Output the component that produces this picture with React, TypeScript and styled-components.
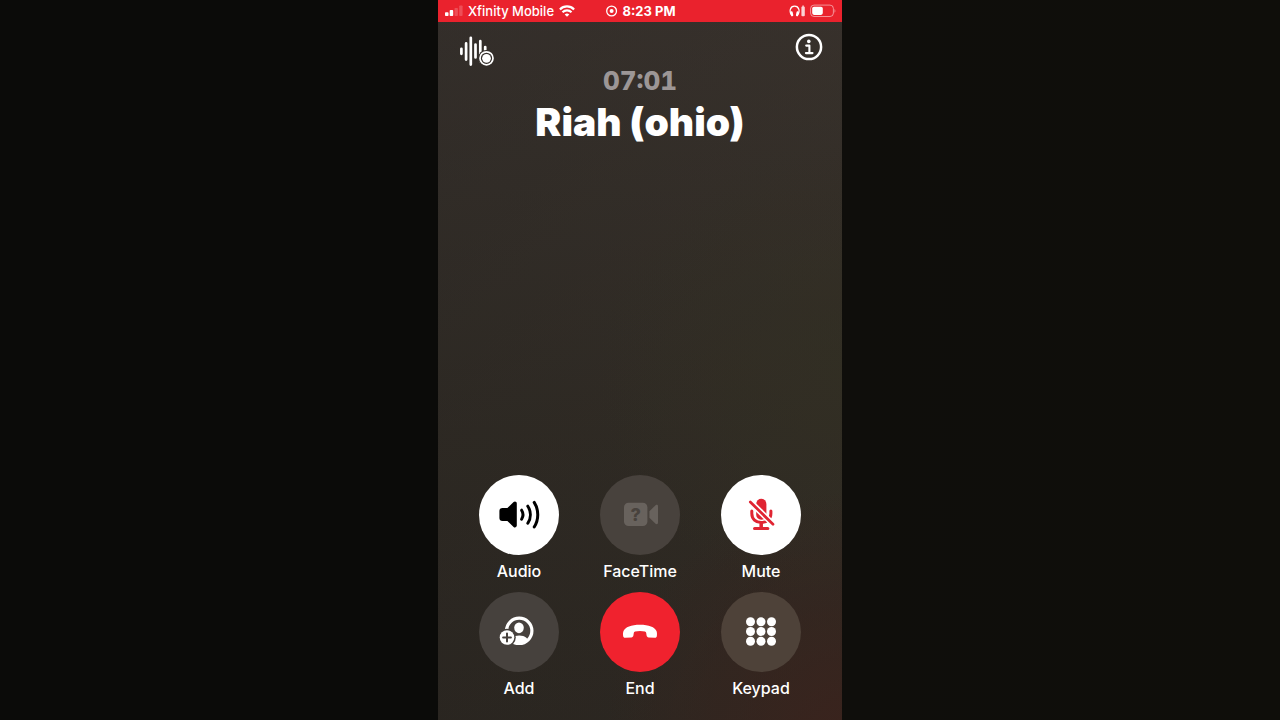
import type { ReactNode } from "react";
import styled, { createGlobalStyle } from "styled-components";

const GlobalStyle = createGlobalStyle`
  *, *::before, *::after { box-sizing: border-box; }
  body {
    margin: 0;
    background: linear-gradient(90deg, #0b0b09 0%, #0b0b09 34%, #0f0e0b 66%, #0f0e0a 100%);
    color: #fff;
    font-family: Inter, "Liberation Sans", sans-serif;
  }
`;

const Stage = styled.div`
  display: flex;
  justify-content: center;
  min-height: 100vh;
`;

const Phone = styled.main`
  display: flex;
  flex-direction: column;
  width: 100%;
  max-width: 404px;
  background:
    radial-gradient(circle at 102% 102%, #3a231d 0%, rgba(58, 35, 29, 0.5) 14%, rgba(58, 35, 29, 0) 29%),
    radial-gradient(ellipse at 104% 52%, rgba(50, 47, 35, 0.8) 0%, rgba(50, 47, 35, 0) 44%),
    linear-gradient(100deg, rgba(46, 42, 36, 0.3) 0%, rgba(62, 54, 42, 0.3) 100%),
    linear-gradient(180deg, #36302d 0%, #312c28 26%, #2b2722 60%, #26221e 100%);
`;

const StatusBar = styled.header`
  display: grid;
  grid-template-columns: 1fr auto 1fr;
  align-items: center;
  height: 22px;
  padding: 0 6px 0 7px;
  background: #ea222d;
  font-size: 13px;
  line-height: 22px;
  white-space: nowrap;
`;

const StatusGroup = styled.div<{ $end?: boolean; $bold?: boolean }>`
  display: flex;
  align-items: center;
  justify-content: ${(p) => (p.$end ? "flex-end" : "flex-start")};
  gap: ${(p) => (p.$end ? "4px" : "5px")};
  font-weight: ${(p) => (p.$bold ? 700 : 500)};
`;

const Toolbar = styled.div`
  display: flex;
  align-items: flex-start;
  justify-content: space-between;
  padding: 11px 19px 0 21px;
`;

const IconButton = styled.button`
  display: flex;
  padding: 0;
  border: 0;
  background: none;
  color: inherit;
  cursor: pointer;
`;

const Caller = styled.section`
  flex: 1;
  text-align: center;
`;

const Timer = styled.p`
  margin: 0;
  color: #9c9696;
  font-size: 26px;
  font-weight: 800;
  font-variant-numeric: tabular-nums;
  line-height: 28px;
`;

const Name = styled.h1`
  margin: 4px 0 0;
  font-size: 39px;
  font-weight: 900;
  line-height: 46px;
`;

const Controls = styled.nav`
  display: grid;
  grid-template-columns: repeat(3, 80px);
  justify-content: space-evenly;
  row-gap: 11px;
  padding-bottom: 22px;
`;

const CallButton = styled.button`
  display: flex;
  flex-direction: column;
  align-items: center;
  gap: 6px;
  padding: 0;
  border: 0;
  background: none;
  color: #fff;
  font-family: inherit;
  font-size: 16px;
  font-weight: 500;
  line-height: 20px;
  cursor: pointer;
`;

const Disc = styled.span<{ $fill: string; $ink: string }>`
  display: block;
  width: 80px;
  height: 80px;
  border-radius: 50%;
  background: ${(p) => p.$fill};
  color: ${(p) => p.$ink};

  svg { display: block; }
`;

const SignalIcon = () => (
  <svg width="18" height="12" viewBox="0 0 18 12" fill="#fff" aria-hidden="true">
    <rect x="0" y="7.3" width="3.5" height="3.7" rx="0.8" />
    <rect x="4.7" y="5.1" width="3.5" height="5.9" rx="0.8" />
    <rect x="9.5" y="3" width="3.4" height="8" rx="0.8" opacity="0.2" />
    <rect x="14.2" y="0.5" width="3.4" height="10.5" rx="0.8" opacity="0.2" />
  </svg>
);

const WifiIcon = () => (
  <svg width="16" height="12" viewBox="0 0 16 12" fill="none" stroke="#fff" strokeWidth="2.2" aria-hidden="true">
    <path d="M0.9 4.4a10 10 0 0 1 14.2 0" />
    <path d="M3.5 7.3a6.4 6.4 0 0 1 9 0" />
    <path d="M8 11.8 5.7 9.5a3.3 3.3 0 0 1 4.6 0z" fill="#fff" stroke="none" />
  </svg>
);

const RecordIcon = () => (
  <svg width="12" height="12" viewBox="0 0 12 12" aria-hidden="true">
    <circle cx="5.6" cy="6" r="4.9" fill="none" stroke="#fff" strokeWidth="1.3" />
    <circle cx="5.6" cy="6" r="2" fill="#fff" />
  </svg>
);

const HeadphonesIcon = () => (
  <svg width="17" height="12" viewBox="0 0 17 12" aria-hidden="true">
    <path d="M2.2 9.6C.2 6.5.9 1.2 5.6 1.2s5.4 5.3 3.4 8.4" fill="none" stroke="#fff" strokeWidth="1.2" />
    <rect x="1.7" y="6.3" width="2.3" height="5" rx="1.1" fill="#fff" transform="rotate(-12 2.8 8.8)" />
    <rect x="7.2" y="6.3" width="2.3" height="5" rx="1.1" fill="#fff" transform="rotate(12 8.4 8.8)" />
    <rect x="12.4" y="1.6" width="3.4" height="9.6" rx="1" fill="#fff" opacity="0.8" />
    <rect x="13.2" y="0.6" width="1.8" height="1" fill="#fff" opacity="0.8" />
  </svg>
);

const BatteryIcon = () => (
  <svg width="26" height="14" viewBox="0 0 26 14" aria-hidden="true">
    <rect x="0.6" y="1.1" width="22.8" height="11.4" rx="3.4" fill="none" stroke="#fff" strokeOpacity="0.5" />
    <rect x="2.2" y="2.7" width="10.6" height="8.2" rx="1.8" fill="#fff" />
    <path d="M24.5 5v3.8c1.2-.6 1.2-3.2 0-3.8z" fill="#fff" opacity="0.5" />
  </svg>
);

const WaveformIcon = () => (
  <svg width="36" height="34" viewBox="0 0 36 34" aria-hidden="true">
    <mask id="wave-cut">
      <rect width="36" height="34" fill="#fff" />
      <circle cx="27.5" cy="25.3" r="8.4" fill="#000" />
    </mask>
    <g mask="url(#wave-cut)">
      <path
        d="M2.4 15.8v5M7.1 10.4v16.2M11.8 4.8v26.8M16.5 11.6v12.8M21.3 8.2v20M26.2 14v6"
        stroke="#fff" strokeWidth="2.7" strokeLinecap="round"
      />
    </g>
    <circle cx="27.5" cy="25.3" r="6.5" fill="none" stroke="#fff" strokeWidth="1.7" />
    <circle cx="27.5" cy="25.3" r="4.4" fill="#fff" />
  </svg>
);

const InfoIcon = () => (
  <svg width="28" height="28" viewBox="0 0 28 28" fill="none" stroke="#fff" aria-hidden="true">
    <circle cx="14" cy="14" r="12.1" strokeWidth="2.5" />
    <circle cx="13.8" cy="8.4" r="1.8" fill="#fff" stroke="none" />
    <path d="M11.2 12.6h3.2v7.4M10.9 20.1h6.6" strokeWidth="2.1" strokeLinecap="round" strokeLinejoin="round" />
  </svg>
);

const DiscSvg = ({ children }: { children: ReactNode }) => (
  <svg width="80" height="80" viewBox="0 0 80 80" fill="currentColor" aria-hidden="true">
    {children}
  </svg>
);

const SpeakerIcon = () => (
  <DiscSvg>
    <path d="M23.4 33h5l6.200-5.900c1.200-1.100 3.200-.4 3.200 1.300v22.200c0 1.700-2 2.400-3.200 1.300L28.400 46h-5c-1.900 0-3-1.100-3-3v-7c0-1.900 1.100-3 3-3z" />
    <g fill="none" stroke="currentColor" strokeWidth="3" strokeLinecap="round">
      <path d="M42.600 35.200a8.500 8.500 0 0 1 0 9" />
      <path d="M48.800 31.200a15.500 15.500 0 0 1 0 17" />
      <path d="M55.200 27.400a23 23 0 0 1 0 24.600" />
    </g>
  </DiscSvg>
);

const VideoIcon = () => (
  <DiscSvg>
    <rect x="24" y="27.7" width="23.4" height="23.4" rx="4.6" />
    <path d="M49.4 36.2 55.6 30.3c1-.9 2.4-.4 2.4.9v16.600c0 1.300-1.400 1.800-2.400.9L49.400 42.800z" />
    <text x="35.600" y="45.800" textAnchor="middle" fontSize="18" fontWeight="800" fill="#48423d">?</text>
  </DiscSvg>
);

const MicOffIcon = () => (
  <DiscSvg>
    <mask id="mic-cut">
      <rect width="80" height="80" fill="#fff" />
      <path d="M26 23.7 56 53" stroke="#000" strokeWidth="6" />
    </mask>
    <g mask="url(#mic-cut)">
      <rect x="35.2" y="23.8" width="10.2" height="21" rx="5.1" />
      <path
        d="M30.8 36v2.6c0 5.4 4 9 9.4 9s9.700-3.600 9.700-9V36M40.200 47.600v5.500"
        fill="none" stroke="currentColor" strokeWidth="3" strokeLinecap="round"
      />
    </g>
    <path d="M33.600 53.500h13.200M40.200 49v4" stroke="currentColor" strokeWidth="3.200" strokeLinecap="round" />
    <path d="M29.300 27 52 49.300" stroke="currentColor" strokeWidth="2.700" strokeLinecap="round" />
  </DiscSvg>
);

const AddPersonIcon = () => (
  <DiscSvg>
    <mask id="add-cut">
      <rect width="80" height="80" fill="#fff" />
      <circle cx="28" cy="45.5" r="8.8" fill="#000" />
    </mask>
    <clipPath id="portrait">
      <circle cx="40.2" cy="38.8" r="13.5" />
    </clipPath>
    <g mask="url(#add-cut)">
      <circle cx="40.2" cy="38.8" r="12.7" fill="none" stroke="currentColor" strokeWidth="3.2" />
      <ellipse cx="40" cy="35.8" rx="4.8" ry="5.4" />
      <path d="M29.2 53.8c1-7 5-10.300 11-10.300s10 3.300 11 10.300z" clipPath="url(#portrait)" />
    </g>
    <circle cx="28" cy="45.5" r="7.3" />
    <path d="M28 41.600v7.800M24.100 45.500h7.800" stroke="#46413d" strokeWidth="2" strokeLinecap="round" />
  </DiscSvg>
);

const HangUpIcon = () => (
  <DiscSvg>
    <path d="M40 32.7c8.8 0 14.9 2.3 16.5 6.4.6 1.600.6 3.500.3 5.200-.2 1-.9 1.600-2 1.500l-6.200-.4c-1.100-.1-1.800-.8-2-1.900l-.4-2.500c-.1-.8-.5-1.300-1.300-1.500-1.400-.4-3-.6-4.900-.6s-3.500.2-4.900.6c-.8.2-1.200.7-1.300 1.500l-.4 2.500c-.2 1.100-.9 1.800-2 1.900l-6.200.4c-1.100.1-1.800-.5-2-1.500-.3-1.700-.3-3.600.3-5.200 1.600-4.100 7.700-6.400 16.500-6.400z" />
  </DiscSvg>
);

const KeypadIcon = () => (
  <DiscSvg>
    {[29.8, 39.5, 49.3].map((y) =>
      [29.5, 40, 50.5].map((x) => <circle key={`${x}-${y}`} cx={x} cy={y} r="4.5" />)
    )}
  </DiscSvg>
);

type Control = { label: string; fill: string; ink: string; icon: ReactNode; disabled?: boolean };

const controls: Control[] = [
  { label: "Audio", fill: "#fff", ink: "#000", icon: <SpeakerIcon /> },
  { label: "FaceTime", fill: "#48423d", ink: "#68625d", icon: <VideoIcon />, disabled: true },
  { label: "Mute", fill: "#fff", ink: "#e02432", icon: <MicOffIcon /> },
  { label: "Add", fill: "#46413d", ink: "#fff", icon: <AddPersonIcon /> },
  { label: "End", fill: "#f0222e", ink: "#fff", icon: <HangUpIcon /> },
  { label: "Keypad", fill: "#4e4239", ink: "#fff", icon: <KeypadIcon /> },
];

export default function App() {
  return (
    <Stage>
      <GlobalStyle />
      <Phone>
        <StatusBar>
          <StatusGroup>
            <SignalIcon />
            <span>Xfinity Mobile</span>
            <WifiIcon />
          </StatusGroup>
          <StatusGroup $bold>
            <RecordIcon />
            <time>8:23 PM</time>
          </StatusGroup>
          <StatusGroup $end>
            <HeadphonesIcon />
            <BatteryIcon />
          </StatusGroup>
        </StatusBar>
        <Toolbar>
          <IconButton type="button" aria-label="Record call">
            <WaveformIcon />
          </IconButton>
          <IconButton type="button" aria-label="Call details">
            <InfoIcon />
          </IconButton>
        </Toolbar>
        <Caller>
          <Timer>07:01</Timer>
          <Name>Riah (ohio)</Name>
        </Caller>
        <Controls aria-label="Call controls">
          {controls.map((c) => (
            <CallButton key={c.label} type="button" disabled={c.disabled}>
              <Disc $fill={c.fill} $ink={c.ink}>{c.icon}</Disc>
              <span>{c.label}</span>
            </CallButton>
          ))}
        </Controls>
      </Phone>
    </Stage>
  );
}
